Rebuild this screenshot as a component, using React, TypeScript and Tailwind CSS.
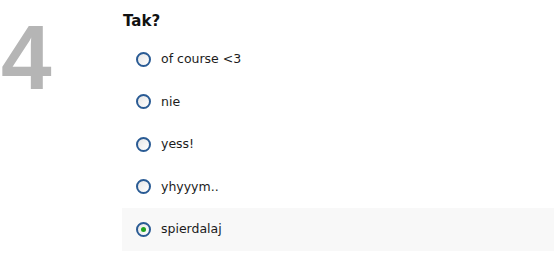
import { useState } from 'react';

const options = ['of course <3', 'nie', 'yess!', 'yhyyym..', 'spierdalaj'];

export default function App() {
  const [selected, setSelected] = useState(4);

  return (
    <div className="flex h-[253px] w-[560px] bg-white font-['DejaVu_Sans',sans-serif] text-[#1b1b1b]">
      {/* question number */}
      <div className="w-[122px] shrink-0 pl-px pt-[12px]">
        <div className="font-['Liberation_Sans',Arial,sans-serif] text-[91px] font-bold leading-none text-[#b5b5b5]">
          4
        </div>
      </div>

      <div className="flex w-[432px] flex-col pt-[11px]">
        <h2 className="pl-px text-[15px] font-bold leading-[21px] text-[#111]">Tak?</h2>

        <ul className="mt-[6px] flex flex-col">
          {options.map((label, i) => {
            const active = selected === i;
            return (
              <li
                key={label}
                onClick={() => setSelected(i)}
                className={`flex h-[42.5px] cursor-pointer items-center pl-[14px] ${active ? 'bg-[#f8f8f8]' : ''}`}
              >
                <span className="flex h-[15px] w-[15px] items-center justify-center rounded-full border-2 border-[#2a5b94] bg-gradient-to-br from-[#e6e6e6] to-white">
                  {active && <span className="h-[5px] w-[5px] rounded-full bg-[#1fa31f]" />}
                </span>
                <span className="ml-[10px] text-[12.5px] leading-none">{label}</span>
              </li>
            );
          })}
        </ul>
      </div>
    </div>
  );
}
